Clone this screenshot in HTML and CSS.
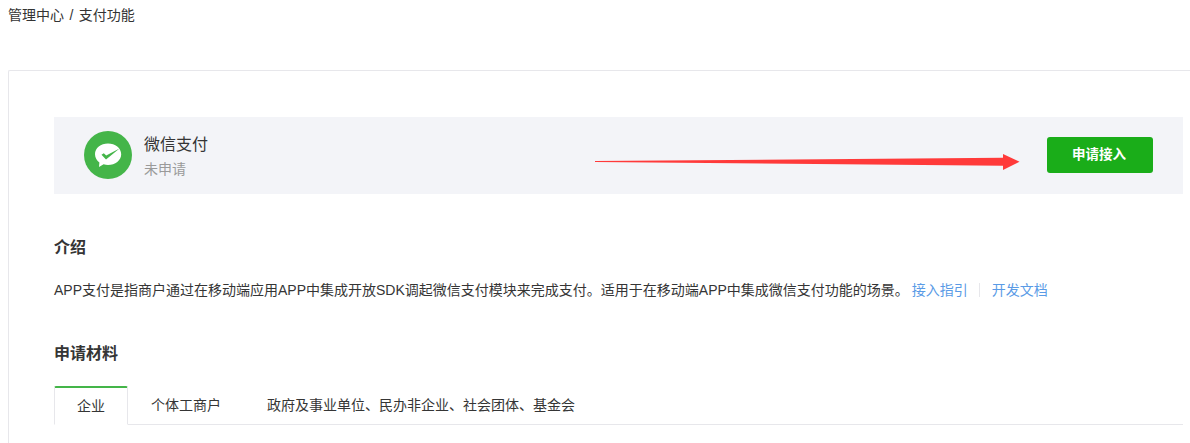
FILE: index.html
```html
<!DOCTYPE html>
<html lang="zh-CN">

<head>
  <meta charset="UTF-8">
  <title>支付功能</title>
  <link rel="stylesheet" href="styles.css">
</head>

<body>
  <div class="breadcrumb">管理中心 / 支付功能</div>
  <div class="card">
    <div class="pay-banner">
      <div class="pay-logo">
        <svg width="48" height="48" viewBox="0 0 48 48">
          <circle cx="24" cy="24" r="24" fill="#44b549"/>
          <path d="M24 12.500C16.800 12.500 11 17 11 23.300C11 27 13 29.800 15.400 31.500L15 36L19.600 33.300C21.200 33.800 22.400 34 24 34C31.200 34 37.200 29.500 37.200 23.300C37.200 17 31.200 12.500 24 12.500Z" fill="#fff"/>
          <path d="M17.500 23.700L19.800 22.200L22.200 24.600L35.500 17.600L22 28.500Z" fill="#44b549"/>
        </svg>
      </div>
      <div class="pay-info">
        <div class="pay-name">微信支付</div>
        <div class="pay-status">未申请</div>
      </div>
      <a class="btn-apply">申请接入</a>
    </div>

    <h3 class="section-title">介绍</h3>
    <p class="intro">APP支付是指商户通过在移动端应用APP中集成开放SDK调起微信支付模块来完成支付。适用于在移动端APP中集成微信支付功能的场景。<a class="link first">接入指引</a><span class="divider"></span><a class="link">开发文档</a></p>

    <h3 class="section-title materials">申请材料</h3>
    <div class="tabs">
      <div class="tab active">企业</div>
      <div class="tab">个体工商户</div>
      <div class="tab">政府及事业单位、民办非企业、社会团体、基金会</div>
    </div>
  </div>

  <svg class="arrow" width="430" height="24" viewBox="0 0 430 24">
    <path d="M0 11L408 7.700V4L424.500 11.700L408 20V15.700L0 12Z" fill="#ff3a3a"/>
  </svg>
</body>

</html>
```

FILE: styles.css
```css
* {
  box-sizing: border-box;
  margin: 0;
  padding: 0;
}

html,
body {
  height: 100%;
  overflow: hidden;
}

body {
  position: relative;
  background: #fff;
  color: #353535;
  font-family: "Liberation Sans", "Noto Sans CJK SC", sans-serif;
  font-size: 14px;
}

.breadcrumb {
  height: 70px;
  padding: 6px 0 0 8px;
  font-size: 14px;
  line-height: 18px;
  word-spacing: 1.500px;
  color: #333;
}

.card {
  width: 1182px;
  height: 373px;
  margin-left: 8px;
  padding: 46px 0 0 45px;
  border: 1px solid #e7e7eb;
  border-right: 0;
  border-bottom: 0;
  border-radius: 2px 0 0 0;
}

.pay-banner {
  display: flex;
  align-items: center;
  width: 1129px;
  height: 77px;
  padding: 0 30px 2px;
  background: #f3f4f8;
}

.pay-logo {
  width: 48px;
  height: 48px;
}

.pay-info {
  flex: 1;
  margin-left: 12px;
  padding-top: 2px;
}

.pay-name {
  font-size: 16px;
  line-height: 22px;
  color: #353535;
}

.pay-status {
  margin-top: 4px;
  font-size: 14px;
  line-height: 18px;
  color: #9a9a9a;
}

.btn-apply {
  width: 106px;
  height: 36px;
  padding-right: 2px;
  border-radius: 3px;
  background: #1aad19;
  color: #fff;
  font-size: 13.500px;
  font-weight: bold;
  line-height: 36px;
  text-align: center;
}

.section-title {
  margin-top: 43px;
  font-size: 16px;
  line-height: 22px;
  font-weight: bold;
  color: #353535;
}

.materials {
  margin-top: 43px;
}

.intro {
  margin-top: 21px;
  font-size: 14px;
  line-height: 20px;
  white-space: nowrap;
}

.link {
  color: #5a9be6;
  font-size: 14px;
}

.link.first {
  margin-left: 3px;
}

.divider {
  display: inline-block;
  width: 1px;
  height: 14px;
  margin: 0 12px 0 11px;
  vertical-align: -2px;
  background: #e7e7eb;
}

.tabs {
  display: flex;
  width: 1129px;
  height: 39px;
  margin-top: 21px;
  border-bottom: 1px solid #e7e7eb;
}

.tab {
  height: 39px;
  padding: 10px 23px 0;
  font-size: 14px;
  line-height: 18px;
  color: #353535;
  white-space: nowrap;
}

.tab.active {
  width: 74px;
  padding-top: 9px;
  padding-left: 22px;
  padding-right: 0;
  border: 1px solid #e7e7eb;
  border-top: 2px solid #44b549;
  border-bottom: 1px solid #fff;
  border-radius: 2px 2px 0 0;
}

.arrow {
  position: absolute;
  left: 595px;
  top: 150px;
}
```
